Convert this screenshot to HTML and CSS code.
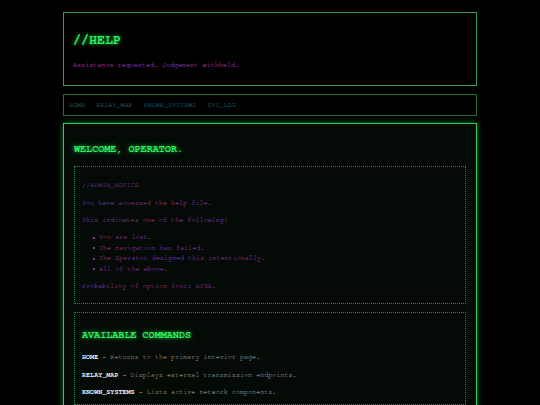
FILE: index.html
```html
<!DOCTYPE html>
<html lang="en">
<head>
<meta charset="utf-8">
<title>//HELP</title>
<link rel="stylesheet" href="styles.css">
</head>
<body>
<div class="page">
  <header class="header">
    <h1 class="title">//HELP</h1>
    <p class="tagline">Assistance requested. Judgement withheld.</p>
  </header>
  <nav class="nav">
    <a class="nav-link" href="#">HOME</a>
    <a class="nav-link" href="#">RELAY_MAP</a>
    <a class="nav-link" href="#">KNOWN_SYSTEMS</a>
    <a class="nav-link" href="#">SYS_LOG</a>
  </nav>
  <main class="main">
    <h2 class="heading">WELCOME, OPERATOR.</h2>
    <section class="panel notice">
      <p class="notice-tag">//ADMIN_NOTICE</p>
      <p>You have accessed the help file.</p>
      <p>This indicates one of the following:</p>
      <ul class="list">
        <li>You are lost.</li>
        <li>The navigation has failed.</li>
        <li>The Operator designed this intentionally.</li>
        <li>All of the above.</li>
      </ul>
      <p>Probability of option four: HIGH.</p>
    </section>
    <section class="panel commands">
      <h2 class="heading">AVAILABLE COMMANDS</h2>
      <p><b class="cmd">HOME</b> - Returns to the primary interior page.</p>
      <p><b class="cmd">RELAY_MAP</b> - Displays external transmission endpoints.</p>
      <p><b class="cmd">KNOWN_SYSTEMS</b> - Lists active network components.</p>
    </section>
  </main>
</div>
</body>
</html>
```
FILE: styles.css
```css
* { box-sizing: border-box; }
html, body {
  margin: 0;
  padding: 0;
  background: #000;
}
body {
  font-family: "Nimbus Mono PS", "Nimbus Mono L", "FreeMono", "Courier", "Courier New", "Liberation Mono", monospace;
  font-size: 6.75px;
  line-height: 10.6px;
  color: #b23cc0;
}
.page {
  width: 414px;
  margin: 0 auto;
  padding-top: 12px;
}
.header {
  border: 1px solid #3c9a5c;
  padding: 0 9px;
}
.title {
  margin: 19.5px 0 12px;
  font-size: 13.3px;
  line-height: 15px;
  font-weight: bold;
  color: #2bf060;
  text-shadow: 0 0 4px rgba(40, 240, 90, 0.8);
}
.tagline {
  margin: 0 0 15px;
  color: #a838b6;
  text-shadow: 0 0 1px rgba(168, 56, 182, 0.6);
}
.nav {
  margin-top: 8px;
  border: 1px solid #2b6a40;
  padding: 4.7px 5px;
  display: flex;
  gap: 11px;
}
.nav-link {
  color: #2a8aa0;
  text-decoration: none;
}
.main {
  margin-top: 7px;
  border: 1px solid #2ad05a;
  background: #040b06;
  box-shadow: 0 0 6px rgba(40, 210, 90, 0.55);
  padding: 10px 10px 12px;
  min-height: 300px;
}
.heading {
  margin: 10.3px 0 10.5px;
  font-size: 10.1px;
  line-height: 11.4px;
  font-weight: bold;
  color: #2bf060;
  text-shadow: 0 0 4px rgba(40, 240, 90, 0.8);
}
.panel {
  border: 1px dotted #1f8a40;
  padding: 0 7px;
  margin-bottom: 8px;
}
.panel p {
  margin: 6.7px 0;
}
.notice { padding-top: 6.5px; padding-bottom: 4.5px; }
.notice-tag { color: #a03cae; }
.list {
  margin: 6px 0 6.5px;
  padding-left: 17px;
  list-style: none;
}
.list li {
  position: relative;
}
.list li::before {
  content: "";
  position: absolute;
  left: -6px;
  top: 4.3px;
  width: 2px;
  height: 2px;
  border-radius: 1px;
  background: #b23cc0;
}
.commands {
  padding-top: 7px;
  color: #b4b4b4;
}
.cmd {
  color: #f0f0f0;
  font-weight: bold;
}
```
